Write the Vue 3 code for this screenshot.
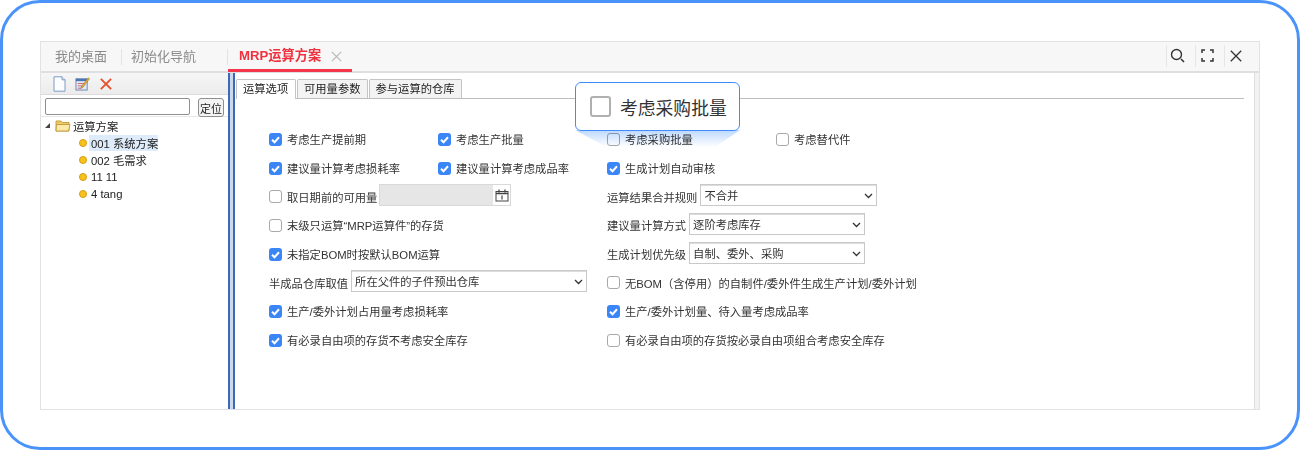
<script setup>
const rows = [
  [{ c: 1, t: '考虑生产提前期' }, { c: 1, t: '考虑生产批量' }, { t: '考虑采购批量', o: 1 }, { t: '考虑替代件', o: 1 }],
  [{ c: 1, t: '建议量计算考虑损耗率' }, { c: 1, t: '建议量计算考虑成品率' }, { c: 1, t: '生成计划自动审核' }, {}],
]
const left = ['末级只运算“MRP运算件”的存货']
</script>

<template>
  <div class="frame">
    <div class="window">
      <div class="topbar">
        <div class="tab muted first">我的桌面</div>
        <i class="sep"></i>
        <div class="tab muted">初始化导航</div>
        <i class="sep sep2"></i>
        <div class="tab current">MRP运算方案<svg class="tabx" width="11" height="11" viewBox="0 0 11 11" fill="none" stroke="#b5b5b5" stroke-width="1.100"><path d="M.8.8l9.400 9.400M10.200.8L.8 10.200"/></svg></div>
        <div class="tools">
          <span class="tool"><svg width="16" height="16" viewBox="0 0 16 16" fill="none" stroke="#333" stroke-width="1.400"><circle cx="6.500" cy="6.500" r="5"/><path d="M11 11l3 3" stroke-width="1.600"/></svg></span>
          <span class="tool"><svg width="13" height="13" viewBox="0 0 13 13" fill="none" stroke="#333" stroke-width="1.500"><path d="M1 4V1h3M9 1h3v3M12 9v3H9M4 12H1V9"/></svg></span>
          <span class="tool"><svg width="12" height="12" viewBox="0 0 12 12" fill="none" stroke="#333" stroke-width="1.300"><path d="M.8.8l10.400 10.400M11.200.8L.8 11.200"/></svg></span>
        </div>
      </div>
      <div class="body">
        <aside class="side">
          <div class="side-tools">
            <svg width="13" height="16" viewBox="0 0 13 16"><path d="M1 .8h8l3 3v11.400H1z" fill="#fbfdff" stroke="#7d9bc4"/><path d="M9 .8v3h3" fill="#dbe6f4" stroke="#7d9bc4"/></svg>
            <svg width="15" height="15" viewBox="0 0 16 16"><rect x="1" y="3" width="12" height="12" fill="#dfe8f5" stroke="#6d86ad"/><rect x="1" y="3" width="12" height="2.500" fill="#4b74b5"/><path d="M3 8h7M3 10.500h6M3 13h4" stroke="#c44" stroke-width=".8"/><path d="M7 11l7-9 1.500 1-7 9-2 1z" fill="#e7b13a" stroke="#8a6414" stroke-width=".5"/></svg>
            <svg width="14" height="14" viewBox="0 0 15 15" fill="none" stroke="#e8502c" stroke-width="2"><path d="M2 2l11 11M13 2L2 13"/></svg>
          </div>
          <div class="search"><input class="search-in" type="text" /><button class="locate">定位</button></div>
          <div class="tree">
            <div class="node root">
              <i class="tri"></i>
              <svg width="16" height="13" viewBox="0 0 16 13"><path d="M1 2h5l1.500 1.500H14V12H1z" fill="#f0c965" stroke="#c09a3a" stroke-width=".9"/><path d="M1.500 5.500h13.500l-1.500 6.500H1z" fill="#fce9a8" stroke="#c09a3a" stroke-width=".9"/></svg>
              <span>运算方案</span>
            </div>
            <div class="node leaf"><i class="dot"></i><span class="sel">001 系统方案</span></div>
            <div class="node leaf"><i class="dot"></i><span class="lab">002 毛需求</span></div>
            <div class="node leaf"><i class="dot"></i><span class="lab">11 11</span></div>
            <div class="node leaf"><i class="dot"></i><span class="lab">4 tang</span></div>
          </div>
        </aside>
        <div class="splitter"></div>
        <main class="content">
          <div class="subtabs">
            <div class="subtab active">运算选项</div>
            <div class="subtab">可用量参数</div>
            <div class="subtab">参与运算的仓库</div>
          </div>
          <div class="form">
            <template v-for="(row, i) in rows" :key="i">
              <label v-for="(f, j) in row" :key="j" class="cell" :class="{ empty: !f.t }">
                <template v-if="f.t"><i class="cb" :class="{ on: f.c }"><svg v-if="f.c" width="13" height="13" viewBox="0 0 13 13" fill="none" stroke="#fff" stroke-width="2"><path d="M3 6.800l2.500 2.400L10 4.300"/></svg></i>{{ f.t }}</template>
              </label>
            </template>

            <div class="cell s2">
              <i class="cb"></i>取日期前的可用量
              <span class="date"><span class="date-fill"></span><svg width="14" height="13" viewBox="0 0 14 13" fill="none" stroke="#444"><rect x="1" y="2.500" width="12" height="9.500"/><path d="M1 4.500h12M4 .5v3M10 .5v3" stroke-width="1.300"/><path d="M7 6.500v4" stroke-width="1.200"/></svg></span>
            </div>
            <div class="cell s2 plain">运算结果合并规则<span class="sel-box w1">不合并<svg class="chev" width="9" height="6" viewBox="0 0 9 6" fill="none" stroke="#333" stroke-width="1.300"><path d="M1 1l3.500 3.500L8 1"/></svg></span></div>

            <div class="cell s2"><i class="cb"></i>{{ left[0] }}</div>
            <div class="cell s2 plain">建议量计算方式<span class="sel-box w2">逐阶考虑库存<svg class="chev" width="9" height="6" viewBox="0 0 9 6" fill="none" stroke="#333" stroke-width="1.300"><path d="M1 1l3.500 3.500L8 1"/></svg></span></div>

            <div class="cell s2"><i class="cb on"><svg width="13" height="13" viewBox="0 0 13 13" fill="none" stroke="#fff" stroke-width="2"><path d="M3 6.800l2.500 2.400L10 4.300"/></svg></i>未指定BOM时按默认BOM运算</div>
            <div class="cell s2 plain">生成计划优先级<span class="sel-box w2">自制、委外、采购<svg class="chev" width="9" height="6" viewBox="0 0 9 6" fill="none" stroke="#333" stroke-width="1.300"><path d="M1 1l3.500 3.500L8 1"/></svg></span></div>

            <div class="cell s2 plain">半成品仓库取值<span class="sel-box w3">所在父件的子件预出仓库<svg class="chev" width="9" height="6" viewBox="0 0 9 6" fill="none" stroke="#333" stroke-width="1.300"><path d="M1 1l3.500 3.500L8 1"/></svg></span></div>
            <div class="cell s2"><i class="cb"></i>无BOM（含停用）的自制件/委外件生成生产计划/委外计划</div>

            <div class="cell s2"><i class="cb on"><svg width="13" height="13" viewBox="0 0 13 13" fill="none" stroke="#fff" stroke-width="2"><path d="M3 6.800l2.500 2.400L10 4.300"/></svg></i>生产/委外计划占用量考虑损耗率</div>
            <div class="cell s2"><i class="cb on"><svg width="13" height="13" viewBox="0 0 13 13" fill="none" stroke="#fff" stroke-width="2"><path d="M3 6.800l2.500 2.400L10 4.300"/></svg></i>生产/委外计划量、待入量考虑成品率</div>

            <div class="cell s2"><i class="cb on"><svg width="13" height="13" viewBox="0 0 13 13" fill="none" stroke="#fff" stroke-width="2"><path d="M3 6.800l2.500 2.400L10 4.300"/></svg></i>有必录自由项的存货不考虑安全库存</div>
            <div class="cell s2"><i class="cb"></i>有必录自由项的存货按必录自由项组合考虑安全库存</div>
          </div>
        </main>
        <div class="edge"></div>
      </div>
    </div>
    <div class="beam"></div>
    <div class="callout"><i class="big-cb"></i>考虑采购批量</div>
  </div>
</template>

<style scoped>
* { box-sizing: border-box; }
.frame {
  position: relative;
  width: 1300px;
  height: 450px;
  padding: 38px 37px 0;
  border: 3px solid #4a93fb;
  border-radius: 40px;
  background: #fff;
  font-family: "Liberation Sans", "Noto Sans CJK SC", sans-serif;
  color: #333;
  overflow: hidden;
}
.window {
  width: 1220px;
  height: 369px;
  border: 1px solid #e2e2e4;
  display: flex;
  flex-direction: column;
}
.topbar {
  height: 31px;
  background: #f7f7f7;
  border-bottom: 2px solid #dfdfe2;
  display: flex;
  align-items: center;
  flex: none;
}
.tab { font-size: 13px; line-height: 32px; height: 31px; flex: none; }
.muted { color: #8a8a8a; }
.first { margin-left: 14px; }
.sep { width: 1px; height: 16px; background: #e3e3e3; margin: 0 9px 0 14px; flex: none; }
.sep2 { margin: 0 0 0 31px; }
.current {
  color: #f0313f;
  font-weight: 700;
  font-size: 13.200px;
  padding: 0 0 0 11px;
  width: 124px;
  border-bottom: 3px solid #f5364a;
  height: 29px;
  margin-top: 2px;
  line-height: 30px;
  display: flex;
  align-items: center;
}
.tabx { margin-left: 10px; flex: none; }
.tools { margin-left: auto; display: flex; height: 100%; align-items: center; margin-top: -2px; }
.tool { width: 29px; height: 22px; padding-right: 6px; display: flex; align-items: center; justify-content: center; border-left: 1px solid #e6e6e6; }
.tool:last-child { margin-right: 7px; width: 28px; }
.body { flex: 1; display: flex; min-height: 0; }
.side { width: 187px; flex: none; display: flex; flex-direction: column; }
.side-tools {
  height: 22px;
  background: linear-gradient(#f6f6f6, #ececec);
  border-bottom: 1px solid #dcdcdc;
  display: flex;
  align-items: center;
  gap: 9px;
  padding-left: 12px;
}
.search { display: flex; align-items: flex-start; padding: 3px 0 0 4px; height: 22px; border-bottom: 1px solid #e6e6e6; flex: none; }
.search-in { width: 145px; height: 17px; border: 1px solid #8f8f8f; border-radius: 2px; background: #fff; padding: 0; }
.locate { width: 26px; height: 19px; margin-left: 8px; padding: 0; border: 1px solid #8f8f8f; border-radius: 3px; background: #f4f4f4; font: 11px "Liberation Sans", "Noto Sans CJK SC", sans-serif; color: #222; }
.tree { font-size: 11.300px; color: #222; }
.node { height: 17px; display: flex; align-items: center; }
.root { padding-left: 4px; gap: 2px; }
.tri { width: 0; height: 0; border-left: 5px solid transparent; border-bottom: 5px solid #444; margin-right: 3px; }
.leaf { padding-left: 38px; }
.dot { width: 8px; height: 8px; border-radius: 50%; background: #f6c31c; border: 1px solid #d99a10; margin-right: 2px; flex: none; }
.sel { background: #deebfa; padding-left: 2px; }
.lab { padding-left: 2px; }
.splitter {
  width: 7px;
  flex: none;
  background: linear-gradient(90deg, #3f68b5 0 2px, #c9d9ee 2px 5px, #3f68b5 5px 7px);
}
.content { flex: 1; min-width: 0; padding: 6px 0 0 1px; }
.subtabs {
  display: flex;
  height: 20px;
  margin-right: 10px;
  border-bottom: 1px solid #bdbdbd;
  gap: 1px;
}
.subtab {
  height: 19px;
  padding: 0 6px;
  border: 1px solid #c4c4c4;
  border-bottom: 0;
  border-radius: 2px 2px 0 0;
  background: #f3f3f3;
  font-size: 11.300px;
  line-height: 19px;
  color: #222;
}
.active { background: #fff; height: 20px; width: 60px; padding: 0 6px; }
.form {
  display: grid;
  grid-template-columns: repeat(4, 169px);
  grid-auto-rows: 28.700px;
  padding: 26px 0 0 33px;
  font-size: 11.300px;
  color: #333;
}
.cell { display: flex; align-items: center; white-space: nowrap; }
.s2 { grid-column: span 2; }
.cb {
  width: 13px;
  height: 13px;
  border: 1px solid #a9a9a9;
  border-radius: 3px;
  background: #fff;
  margin-right: 5px;
  flex: none;
  display: block;
}
.cb.on { background: #3a86f7; border: 0; }
.cb svg { display: block; }
.date { display: flex; align-items: center; width: 132px; height: 22px; margin: 0 0 3px 2px; border: 1px solid #d9d9d9; background: #fff; }
.date-fill { width: 113px; height: 100%; background: #e6e6e6; margin-right: 2px; }
.sel-box {
  display: flex;
  align-items: center;
  position: relative;
  height: 22px;
  margin: 0 0 3px 3px;
  padding-left: 3px;
  border: 1px solid #c9c9c9;
  background: #fff;
  box-shadow: inset 0 1px 0 #ddd;
}
.w1 { width: 177px; }
.w2 { width: 176px; }
.w3 { width: 236px; }
.chev { position: absolute; right: 3px; top: 8px; }
.edge { width: 5px; flex: none; background: #f2f2f2; border-left: 1px solid #dedede; }
.callout {
  position: absolute;
  left: 572px;
  top: 79px;
  width: 165px;
  height: 49px;
  background: #fff;
  border: 1px solid #3f8cfb;
  border-radius: 6px;
  display: flex;
  align-items: center;
  padding-left: 14px;
  font-size: 17.800px;
  color: #333;
}
.big-cb { width: 21px; height: 21px; border: 2px solid #b0b0b0; border-radius: 3px; margin-right: 9px; flex: none; }
.beam {
  position: absolute;
  left: 572px;
  top: 127px;
  width: 165px;
  height: 17px;
  background: linear-gradient(#bcd8fd, #fff);
  mix-blend-mode: multiply;
  clip-path: polygon(0 0, 100% 0, 85% 100%, 19% 100%);
}
</style>
